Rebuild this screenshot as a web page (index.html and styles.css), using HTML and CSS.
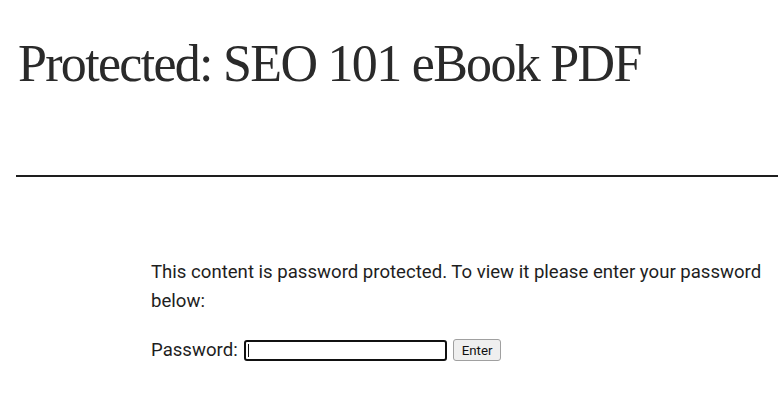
FILE: index.html
```html
<!DOCTYPE html>
<html lang="en">
<head>
<meta charset="utf-8">
<title>Protected: SEO 101 eBook PDF</title>
<link rel="stylesheet" href="styles.css">
</head>
<body>
<header class="entry-header">
  <h1 class="entry-title">Protected: SEO 101 eBook PDF</h1>
</header>
<hr class="separator">
<main class="entry-content">
  <form class="post-password-form">
    <p class="intro">This content is password protected. To view it please enter your password below:</p>
    <p class="field-row">
      <label class="pw-label">Password: <span class="pw-wrap"><input class="pw-input" type="password" name="post_password"><span class="caret"></span></span></label>
      <button class="pw-submit" type="button">Enter</button>
    </p>
  </form>
</main>
</body>
</html>
```

FILE: styles.css
```css
html, body {
  margin: 0;
  padding: 0;
  background: #ffffff;
}

body {
  color: #1e1e1e;
  font-family: Roboto, "Liberation Sans", sans-serif;
}

.entry-header {
  padding: 33px 0 0 18px;
}

.entry-title {
  margin: 0;
  font-family: "Liberation Serif", "DejaVu Serif", serif;
  font-weight: 400;
  font-size: 52px;
  line-height: 1.2;
  letter-spacing: -1.7px;
  color: #2a2a2a;
}

.separator {
  margin: 80px 0 0 16px;
  border: 0;
  height: 2px;
  background: #1e1e1e;
}

.entry-content {
  padding: 81px 0 0 151px;
  width: 620px;
}

.post-password-form p {
  margin: 0;
}

.intro {
  font-size: 18.6px;
  line-height: 28.5px;
}

.field-row {
  margin-top: 21px !important;
  display: flex;
  align-items: center;
  gap: 6px;
  font-size: 18.6px;
  line-height: 28px;
}

.pw-label {
  display: flex;
  align-items: center;
  gap: 6px;
}

.pw-wrap {
  position: relative;
  display: flex;
}

.pw-input {
  box-sizing: border-box;
  width: 203px;
  height: 21px;
  margin: 0;
  padding: 1px 2px;
  border: 2px solid #111111;
  border-radius: 3px;
  background: #ffffff;
  outline: none;
}

.caret {
  position: absolute;
  left: 4px;
  top: 4px;
  width: 1px;
  height: 13px;
  background: #111111;
}

.pw-submit {
  box-sizing: border-box;
  height: 22px;
  margin: 0;
  padding: 1px 8px;
  font-family: Roboto, "Liberation Sans", sans-serif;
  font-size: 13.3px;
  color: #111111;
  background: #efefef;
  border: 1px solid #a0a0a0;
  border-radius: 3px;
}
```
